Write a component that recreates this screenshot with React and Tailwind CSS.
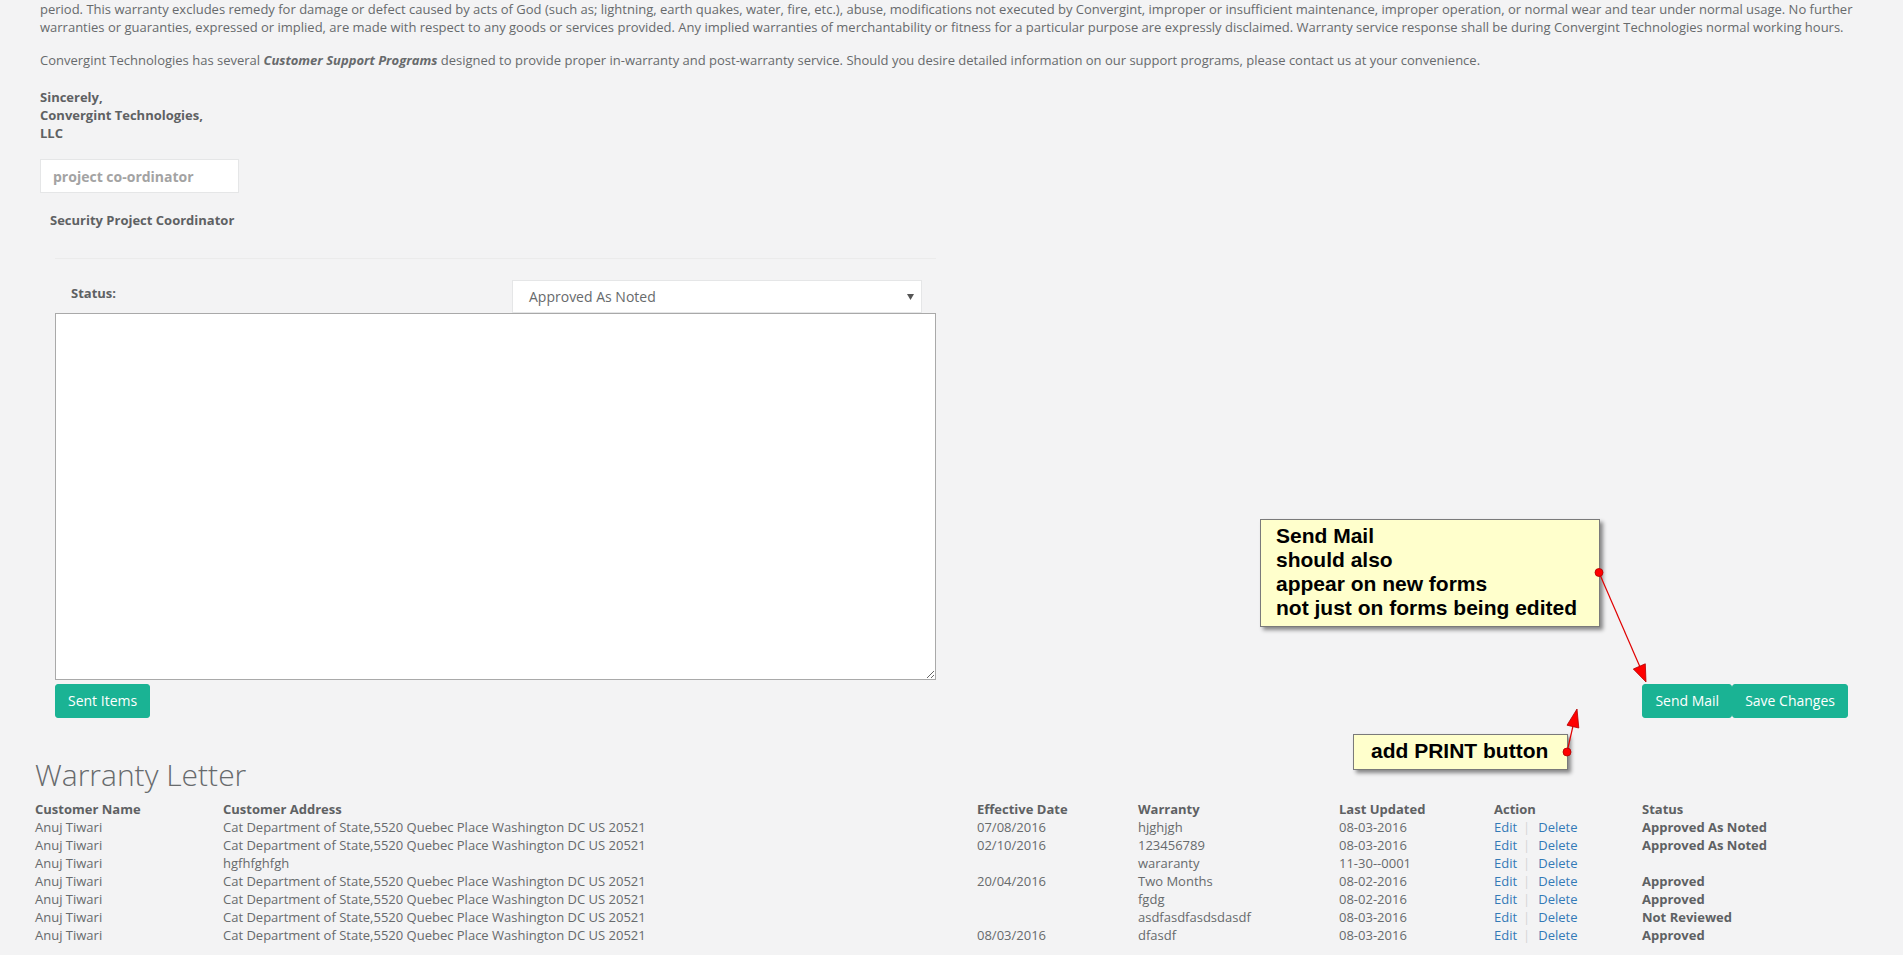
import React from 'react'

const rows = [
	{ name: 'Anuj Tiwari', address: 'Cat Department of State,5520 Quebec Place Washington DC US 20521', date: '07/08/2016', warranty: 'hjghjgh', updated: '08-03-2016', status: 'Approved As Noted' },
	{ name: 'Anuj Tiwari', address: 'Cat Department of State,5520 Quebec Place Washington DC US 20521', date: '02/10/2016', warranty: '123456789', updated: '08-03-2016', status: 'Approved As Noted' },
	{ name: 'Anuj Tiwari', address: 'hgfhfghfgh', date: '', warranty: 'wararanty', updated: '11-30--0001', status: '' },
	{ name: 'Anuj Tiwari', address: 'Cat Department of State,5520 Quebec Place Washington DC US 20521', date: '20/04/2016', warranty: 'Two Months', updated: '08-02-2016', status: 'Approved' },
	{ name: 'Anuj Tiwari', address: 'Cat Department of State,5520 Quebec Place Washington DC US 20521', date: '', warranty: 'fgdg', updated: '08-02-2016', status: 'Approved' },
	{ name: 'Anuj Tiwari', address: 'Cat Department of State,5520 Quebec Place Washington DC US 20521', date: '', warranty: 'asdfasdfasdsdasdf', updated: '08-03-2016', status: 'Not Reviewed' },
	{ name: 'Anuj Tiwari', address: 'Cat Department of State,5520 Quebec Place Washington DC US 20521', date: '08/03/2016', warranty: 'dfasdf', updated: '08-03-2016', status: 'Approved' },
]

const cols = 'grid grid-cols-[188px_754px_161px_201px_155px_148px_1fr]'

const Btn = ({ children }) => (
	<button className="h-[34px] rounded-[3px] border border-[#1ab394] bg-[#1ab394] px-[12px] text-[14px] leading-[20px] text-white">
		{children}
	</button>
)

// annotation arrows drawn over the page
const Arrows = () => (
	<svg className="pointer-events-none absolute left-0 top-0" width="1903" height="955" viewBox="0 0 1903 955">
		<g>
			<line x1="1599" y1="572.5" x2="1640" y2="667" stroke="#e00000" strokeWidth="1.2" />
			<polygon points="1646,682 1645.3,663.8 1633.3,669" fill="#ff0000" stroke="#b00000" strokeWidth="0.8" />
			<circle cx="1599" cy="572.5" r="4" fill="#ff0000" stroke="#b00000" strokeWidth="0.8" />
		</g>
		<g>
			<line x1="1567" y1="752" x2="1573" y2="726" stroke="#e00000" strokeWidth="1.2" />
			<polygon points="1577,709 1578.8,728 1567,725.2" fill="#ff0000" stroke="#b00000" strokeWidth="0.8" />
			<circle cx="1567" cy="752" r="4" fill="#ff0000" stroke="#b00000" strokeWidth="0.8" />
		</g>
	</svg>
)

export default function App() {
	return (
		<div className="relative h-[955px] overflow-hidden bg-[#f3f3f4] font-['Open_Sans',sans-serif] text-[13px] leading-[18px] text-[#676a6c]">
			<div className="pl-[40px]">
				<p className="whitespace-nowrap">
					period. This warranty excludes remedy for damage or defect caused by acts of God (such as; lightning, earth quakes, water, fire, etc.), abuse, modifications not executed by Convergint, improper or insufficient maintenance, improper operation, or normal wear and tear under normal usage. No further
					<br />
					warranties or guaranties, expressed or implied, are made with respect to any goods or services provided. Any implied warranties of merchantability or fitness for a particular purpose are expressly disclaimed. Warranty service response shall be during Convergint Technologies normal working hours.
				</p>
				<p className="mt-[15px] whitespace-nowrap">
					Convergint Technologies has several <strong><em>Customer Support Programs</em></strong> designed to provide proper in-warranty and post-warranty service. Should you desire detailed information on our support programs, please contact us at your convenience.
				</p>
				<p className="mt-[19px] font-bold text-[#5e6163]">
					Sincerely,
					<br />
					Convergint Technologies,
					<br />
					LLC
				</p>
				<input
					className="mt-[17px] block h-[34px] w-[199px] border border-[#e5e6e7] bg-white px-[12px] text-[14px] font-bold placeholder:text-[#a3a3a3] focus:outline-none"
					placeholder="project co-ordinator"
				/>
				<p className="mt-[18px] pl-[10px] font-bold text-[#5e6163]">Security Project Coordinator</p>
			</div>

			<div className="ml-[55px] w-[881px]">
				<div className="mt-[29px] border-t border-[#ebebeb]" />
				<div className="mt-[21px] flex">
					<span className="mt-[4px] w-[457px] pl-[16px] font-bold text-[#5e6163]">Status:</span>
					<div className="flex h-[33px] w-[410px] items-center justify-between border border-[#e5e6e7] bg-white pl-[16px] pr-[7px] text-[14px] text-[#676a6c]">
						<span>Approved As Noted</span>
						<svg width="7" height="6" viewBox="0 0 7 6">
							<path d="M0 0 L7 0 L3.5 6 Z" fill="#555" />
						</svg>
					</div>
				</div>
				<textarea className="block h-[367px] w-[881px] border border-[#a9a9a9] bg-white focus:outline-none" />
			</div>

			<div className="mt-[4px] flex justify-between px-[55px]">
				<Btn>Sent Items</Btn>
				<div className="flex">
					<Btn>Send Mail</Btn>
					<Btn>Save Changes</Btn>
				</div>
			</div>

			<h1 className="mt-[40px] pl-[35px] text-[30px] font-light leading-[33px] text-[#676a6c]">Warranty Letter</h1>

			<div className="mt-[9px] pl-[35px]">
				<div className={`${cols} font-bold text-[#5e6163]`}>
					<span>Customer Name</span>
					<span>Customer Address</span>
					<span>Effective Date</span>
					<span>Warranty</span>
					<span>Last Updated</span>
					<span>Action</span>
					<span>Status</span>
				</div>
				{rows.map((r, i) => (
					<div key={i} className={cols}>
						<span>{r.name}</span>
						<span>{r.address}</span>
						<span>{r.date}</span>
						<span>{r.warranty}</span>
						<span>{r.updated}</span>
						<span>
							<a href="#" className="text-[#337ab7]">Edit</a>
							<span className="ml-[6px] mr-[8px] text-[#d5d5d5]">|</span>
							<a href="#" className="text-[#337ab7]">Delete</a>
						</span>
						<span className="font-bold text-[#5e6163]">{r.status}</span>
					</div>
				))}
			</div>

			<div className="absolute left-[1260px] top-[519px] w-[340px] border border-[#7a7a7a] bg-[#ffffcc] pb-[6px] pl-[15px] pt-[4px] font-['Liberation_Sans',Arial,sans-serif] text-[21px] font-bold leading-[24px] text-black shadow-[3px_3px_4px_rgba(0,0,0,0.45)]">
				Send Mail
				<br />
				should also
				<br />
				appear on new forms
				<br />
				not just on forms being edited
			</div>

			<div className="absolute left-[1353px] top-[734px] w-[215px] border border-[#7a7a7a] bg-[#ffffcc] pb-[6px] pl-[17px] pt-[4px] font-['Liberation_Sans',Arial,sans-serif] text-[21px] font-bold leading-[24px] text-black shadow-[3px_3px_4px_rgba(0,0,0,0.45)]">
				add PRINT button
			</div>

			<Arrows />
		</div>
	)
}
